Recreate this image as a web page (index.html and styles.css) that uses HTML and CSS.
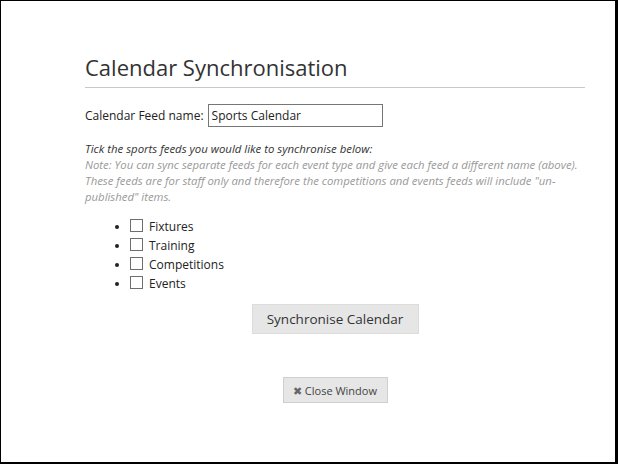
FILE: index.html
```html
<!DOCTYPE html>
<html>
<head>
<meta charset="utf-8">
<link rel="stylesheet" href="styles.css">
</head>
<body>
<div class="frame">
  <div class="content">
    <h1 class="title">Calendar Synchronisation</h1>
    <div class="feed-row">
      <label class="feed-label">Calendar Feed name:</label>
      <input class="feed-input" type="text" value="Sports Calendar">
    </div>
    <p class="intro">Tick the sports feeds you would like to synchronise below:</p>
    <p class="note">Note: You can sync separate feeds for each event type and give each feed a different name (above).<br>These feeds are for staff only and therefore the competitions and events feeds will include "un-<br>published" items.</p>
    <ul class="feeds">
      <li><span class="box"></span>Fixtures</li>
      <li><span class="box"></span>Training</li>
      <li><span class="box"></span>Competitions</li>
      <li><span class="box"></span>Events</li>
    </ul>
    <div class="sync-row"><button class="sync-btn">Synchronise Calendar</button></div>
    <div class="close-row"><button class="close-btn"><span class="x">✖</span> Close Window</button></div>
  </div>
</div>
</body>
</html>
```
FILE: styles.css
```css
html, body { margin: 0; padding: 0; background: #fff; }
.frame {
  box-sizing: border-box;
  width: 618px;
  height: 464px;
  border-top: 1px solid #000;
  border-left: 1px solid #000;
  border-right: 3px solid #000;
  border-bottom: 2px solid #000;
  font-family: "Open Sans", "Noto Sans", sans-serif;
  color: #222;
}
.content {
  width: 500px;
  margin-left: 84px;
  padding-top: 48px;
}
.title {
  margin: 0;
  font-weight: 400;
  font-size: 22px;
  line-height: 36px;
  color: #333;
  padding-bottom: 2px;
  border-bottom: 1px solid #c8c8c8;
}
.feed-row {
  display: flex;
  align-items: center;
  margin-top: 16px;
  font-size: 12px;
}
.feed-label { margin-right: 4px; }
.feed-input {
  box-sizing: border-box;
  width: 175px;
  height: 23px;
  border: 1px solid #767676;
  font-family: inherit;
  font-size: 12px;
  padding: 0 3px;
  color: #222;
  margin: 0;
}
.intro {
  margin: 14px 0 0;
  font-size: 11.4px;
  font-style: italic;
  line-height: 16px;
  color: #333;
}
.note {
  margin: 0;
  font-size: 11.35px;
  font-style: italic;
  line-height: 16px;
  color: #999;
  white-space: nowrap;
}
.feeds {
  list-style: disc;
  margin: 12px 0 0;
  padding-left: 45px;
  font-size: 12px;
  line-height: 19px;
}
.box {
  display: inline-block;
  box-sizing: border-box;
  width: 13px;
  height: 13px;
  border: 1px solid #6e6e6e;
  vertical-align: -1px;
  margin-right: 6px;
  background: #fff;
}
.sync-row {
  display: flex;
  justify-content: center;
  margin-top: 11px;
}
.sync-btn {
  width: 167px;
  height: 30px;
  background: #e6e6e6;
  border: 1px solid #dcdcdc;
  font-family: inherit;
  font-size: 13.5px;
  color: #333;
}
.close-row {
  display: flex;
  justify-content: center;
  margin-top: 43px;
}
.close-btn {
  width: 105px;
  height: 26px;
  background: #e6e6e6;
  border: 1px solid #cfcfcf;
  font-family: inherit;
  font-size: 11px;
  color: #444;
  padding: 0;
}
.x { color: #666; font-size: 11px; }
```
